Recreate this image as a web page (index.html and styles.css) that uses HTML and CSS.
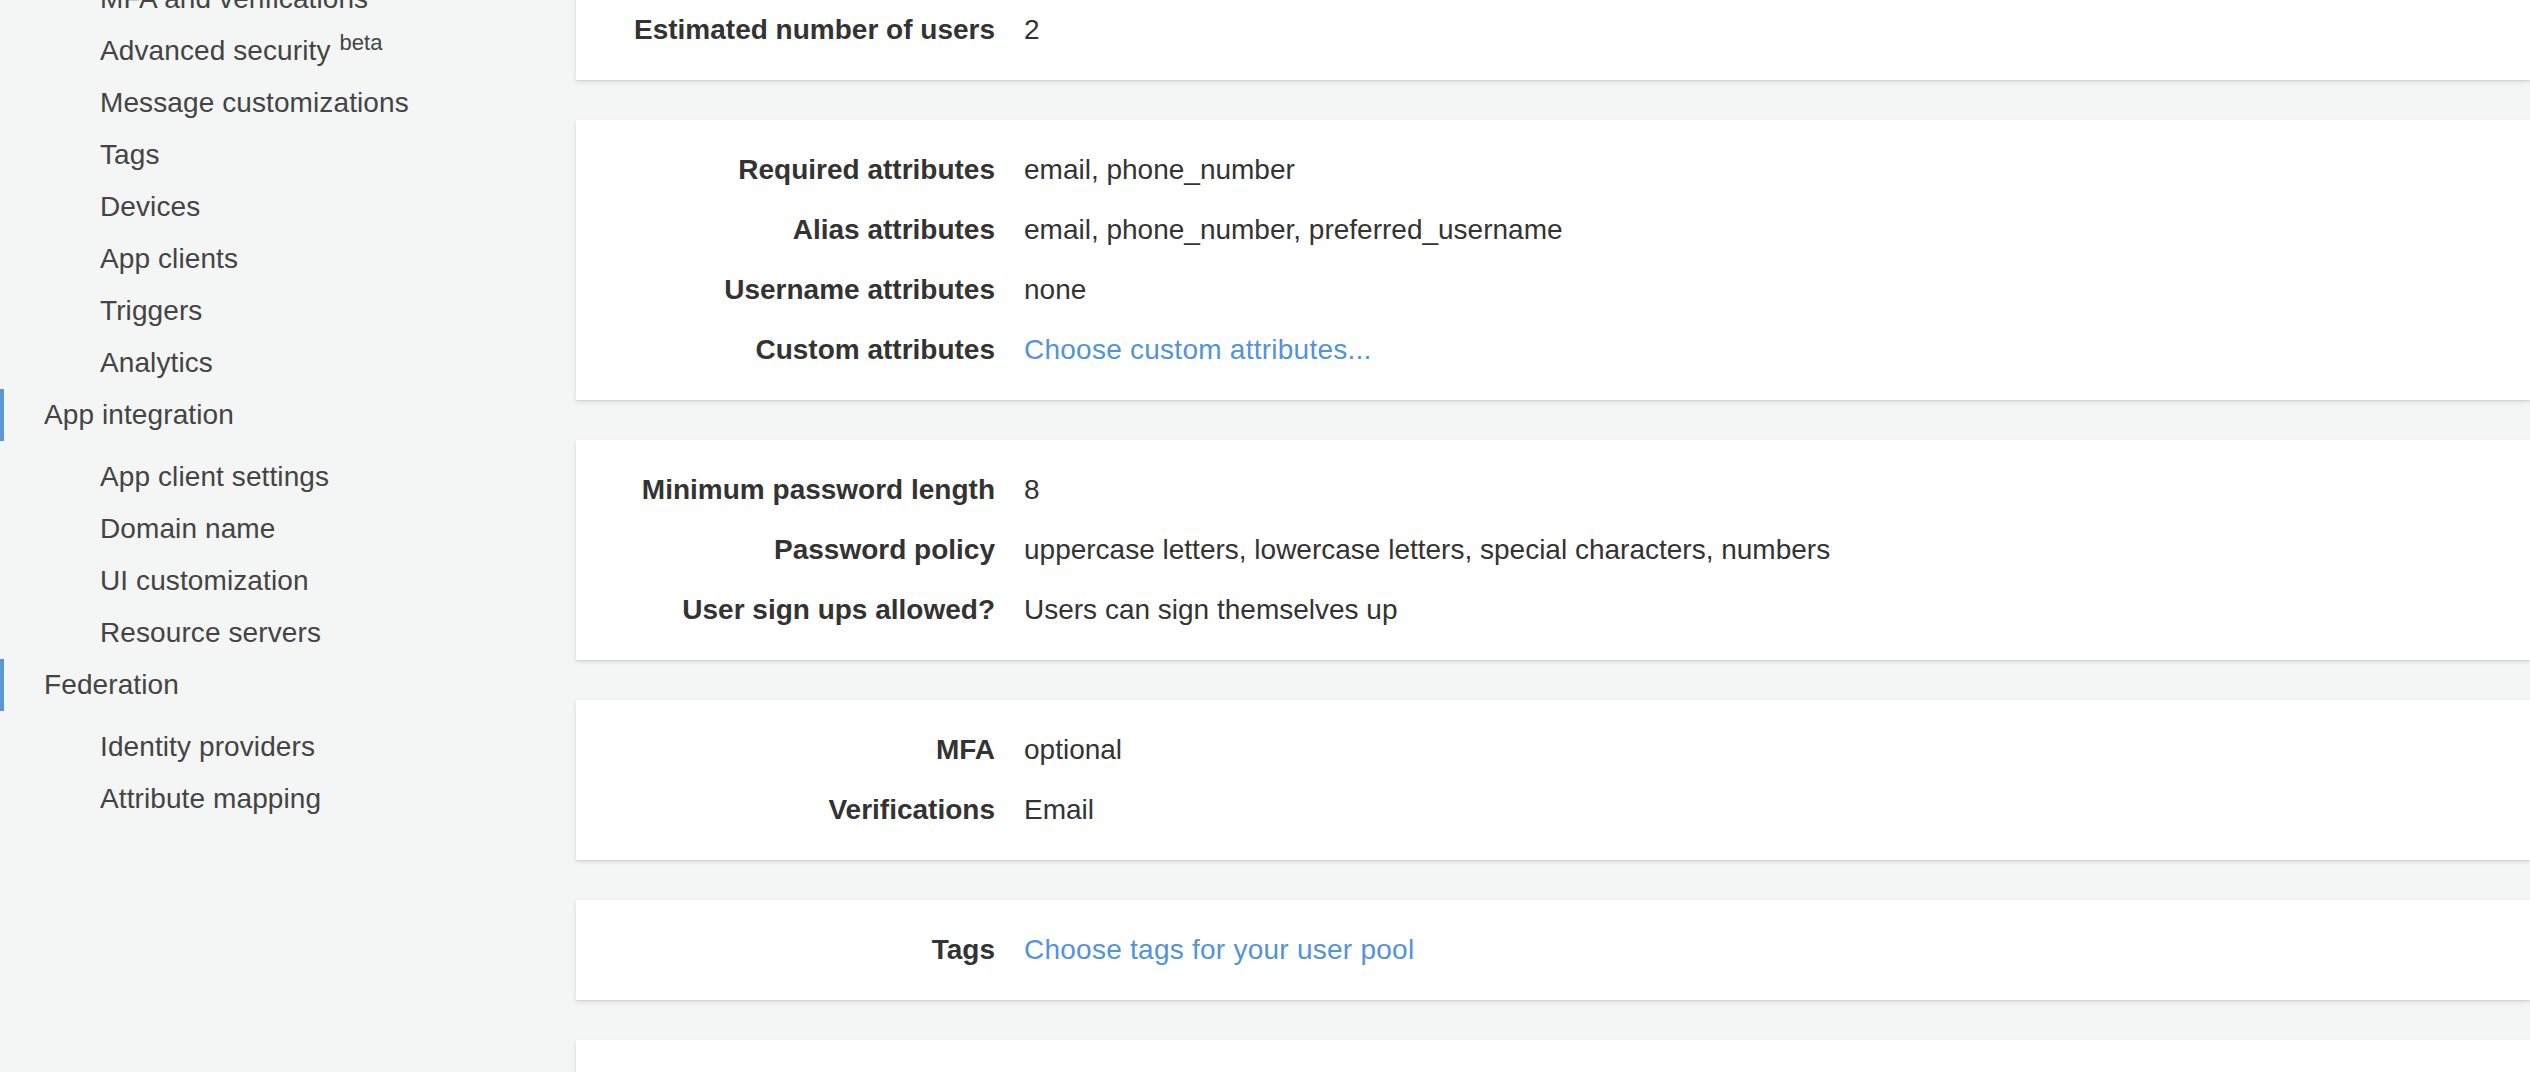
FILE: index.html
```html
<!DOCTYPE html>
<html lang="en">
<head>
<meta charset="utf-8">
<title>User pool review</title>
<link rel="stylesheet" href="styles.css">
</head>
<body>
<div class="layout">
  <nav class="sidebar">
    <ul class="nav-group">
      <li class="nav-sub">MFA and verifications</li>
      <li class="nav-sub">Advanced security <sup class="beta">beta</sup></li>
      <li class="nav-sub">Message customizations</li>
      <li class="nav-sub">Tags</li>
      <li class="nav-sub">Devices</li>
      <li class="nav-sub">App clients</li>
      <li class="nav-sub">Triggers</li>
      <li class="nav-sub">Analytics</li>
    </ul>
    <div class="nav-head">App integration</div>
    <ul class="nav-group padded">
      <li class="nav-sub">App client settings</li>
      <li class="nav-sub">Domain name</li>
      <li class="nav-sub">UI customization</li>
      <li class="nav-sub">Resource servers</li>
    </ul>
    <div class="nav-head">Federation</div>
    <ul class="nav-group padded">
      <li class="nav-sub">Identity providers</li>
      <li class="nav-sub">Attribute mapping</li>
    </ul>
  </nav>
  <main class="main">
    <section class="card">
      <div class="row"><div class="label">Estimated number of users</div><div class="value">2</div></div>
    </section>
    <section class="card">
      <div class="row"><div class="label">Required attributes</div><div class="value">email, phone_number</div></div>
      <div class="row"><div class="label">Alias attributes</div><div class="value">email, phone_number, preferred_username</div></div>
      <div class="row"><div class="label">Username attributes</div><div class="value">none</div></div>
      <div class="row"><div class="label">Custom attributes</div><div class="value"><a class="link" href="#">Choose custom attributes...</a></div></div>
    </section>
    <section class="card">
      <div class="row"><div class="label">Minimum password length</div><div class="value">8</div></div>
      <div class="row"><div class="label">Password policy</div><div class="value">uppercase letters, lowercase letters, special characters, numbers</div></div>
      <div class="row"><div class="label">User sign ups allowed?</div><div class="value">Users can sign themselves up</div></div>
    </section>
    <section class="card">
      <div class="row"><div class="label">MFA</div><div class="value">optional</div></div>
      <div class="row"><div class="label">Verifications</div><div class="value">Email</div></div>
    </section>
    <section class="card">
      <div class="row"><div class="label">Tags</div><div class="value"><a class="link" href="#">Choose tags for your user pool</a></div></div>
    </section>
    <section class="card card-tall"></section>
  </main>
</div>
</body>
</html>
```

FILE: styles.css
```css
html, body {
  margin: 0;
  padding: 0;
}
body {
  background: #f4f5f5;
  font-family: "Liberation Sans", Arial, Helvetica, sans-serif;
  font-size: 28px;
  color: #333333;
  overflow: hidden;
  height: 1072px;
}
.layout {
  display: flex;
  margin-top: -28px;
}
.sidebar {
  width: 576px;
  flex: none;
  padding-top: 1px;
  color: #444444;
  letter-spacing: 0.1px;
}
.nav-group {
  list-style: none;
  margin: 0;
  padding: 0;
}
.nav-group.padded {
  padding-top: 10px;
}
.nav-sub {
  height: 52px;
  line-height: 52px;
  padding-left: 100px;
  white-space: nowrap;
}
.nav-head {
  height: 52px;
  line-height: 52px;
  padding-left: 40px;
  border-left: 4px solid #5a97d3;
  white-space: nowrap;
}
.beta {
  font-size: 22px;
  line-height: 0;
  vertical-align: 10px;
  margin-left: 1px;
}
.main {
  flex: 1;
  min-width: 0;
  padding-top: 8px;
  display: flex;
  flex-direction: column;
  gap: 40px;
}
.card {
  background: #ffffff;
  padding: 20px 0;
  box-shadow: 0 1px 1px rgba(0, 0, 0, 0.05), 0 2px 5px rgba(0, 0, 0, 0.11);
}
.card-tall {
  min-height: 200px;
}
.row {
  display: grid;
  grid-template-columns: 419px 1fr;
  column-gap: 29px;
  height: 60px;
  line-height: 60px;
  white-space: nowrap;
}
.label {
  text-align: right;
  font-weight: bold;
  color: #333333;
}
.value {
  color: #333333;
}
.link {
  color: #5294d6;
  text-decoration: none;
  letter-spacing: 0.25px;
}
```
